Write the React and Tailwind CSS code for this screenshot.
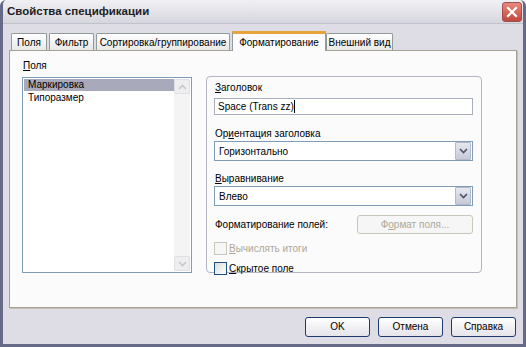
import React from 'react';

const font = { fontFamily: '"Liberation Sans", Arial, sans-serif' };

function Chevron({ up, className }) {
  return (
    <svg width="9" height="6" viewBox="0 0 9 6" className={className}>
      <path d={up ? 'M1 5 L4.5 1.5 L8 5' : 'M1 1 L4.5 4.5 L8 1'} fill="none" stroke="currentColor" strokeWidth="1.6" />
    </svg>
  );
}

function Tab({ label, width, active }) {
  if (active) {
    return (
      <div
        className="relative z-10 -mb-px h-[20px] bg-[#fbfbfb] border-x border-[#919b9c] border-t-[3px] border-t-[#e8a43c] flex items-center justify-center whitespace-nowrap"
        style={{ width }}
      >
        {label}
      </div>
    );
  }
  return (
    <div
      className="h-[17px] mr-[2px] bg-gradient-to-b from-white to-[#e8e8e6] border border-b-0 border-[#919b9c] rounded-t-[2px] flex items-center justify-center whitespace-nowrap"
      style={{ width }}
    >
      {label}
    </div>
  );
}

function Select({ value }) {
  return (
    <div className="h-[20px] border border-[#7f9db9] bg-white flex items-center">
      <span className="flex-1 pl-[4px]">{value}</span>
      <div className="w-[16px] h-[18px] mr-px bg-gradient-to-b from-[#e6e8f0] to-[#c6cad8] border border-[#b4b8c8] rounded-[1px] flex items-center justify-center text-[#4d5366]">
        <Chevron />
      </div>
    </div>
  );
}

function Button({ children }) {
  return (
    <button className="w-[65px] h-[20px] border border-[#1c3c70] rounded-[3px] bg-gradient-to-b from-white to-[#e4e4ea] text-[10px] text-black leading-none">
      {children}
    </button>
  );
}

export default function App() {
  return (
    <div
      className="w-[526px] h-[347px] bg-[#dedce4] border-x-[3px] border-b-[3px] border-[#666a86] rounded-t-[6px] flex flex-col text-[10px] text-black overflow-hidden"
      style={font}
    >
      {/* title bar */}
      <div className="h-[24px] shrink-0 bg-gradient-to-b from-[#f0f0f4] to-[#d6d6de] border-b border-[#c2c2cc] flex items-center pl-[4px] pr-[1px]">
        <span className="flex-1 text-[11.5px] font-bold text-[#1e1e24]">Свойства спецификации</span>
        <div className="w-[20px] h-[20px] rounded-[3px] bg-gradient-to-b from-[#e88a80] to-[#c0473d] border border-[#a05048] flex items-center justify-center">
          <svg width="12" height="12" viewBox="0 0 12 12">
            <path d="M2 2 L10 10 M10 2 L2 10" stroke="white" strokeWidth="2.2" strokeLinecap="square" />
          </svg>
        </div>
      </div>

      <div className="flex-1 flex flex-col px-[6px] pt-[6px]">
        {/* tabs */}
        <div className="flex items-end h-[20px] pl-[2px]">
          <Tab label="Поля" width={36} />
          <Tab label="Фильтр" width={45} />
          <Tab label="Сортировка/группирование" width={134} />
          <Tab label="Форматирование" width={94} active />
          <Tab label="Внешний вид" width={67} />
        </div>

        {/* panel */}
        <div className="h-[258px] bg-[#fbfbfb] border border-[#a6a192] shadow-[1px_1px_0_#c4c0b4] flex pl-[12px] pr-[34px] pt-[8px]">
          <div className="flex flex-col w-[170px]">
            <div className="h-[13px] leading-[13px] pl-px"><span className="underline">П</span>оля</div>
            <div className="mt-[5px] h-[196px] border border-[#7f9db9] bg-white flex p-px">
              <div className="flex-1 flex flex-col">
                <div className="h-[12px] leading-[12px] bg-[#a8aabb] pl-[4px]">Маркировка</div>
                <div className="h-[13px] leading-[13px] pl-[4px]">Типоразмер</div>
              </div>
              <div className="w-[16px] flex flex-col justify-between bg-[#f4f4f4]">
                <div className="h-[15px] bg-[#eeeef0] border border-[#e0e0e4] rounded-[2px] flex items-center justify-center text-[#c8c8cc]">
                  <Chevron up />
                </div>
                <div className="h-[15px] bg-[#eeeef0] border border-[#e0e0e4] rounded-[2px] flex items-center justify-center text-[#c8c8cc]">
                  <Chevron />
                </div>
              </div>
            </div>
          </div>

          <div className="ml-[14px] mt-[17px] h-[197px] flex-1 border border-[#b2b4c2] rounded-[4px] flex flex-col pl-[7px] pr-[8px] pt-[4px]">
            <div className="h-[13px] leading-[13px] pl-px"><span className="underline">З</span>аголовок</div>
            <div className="mt-[4px] h-[17px] border border-[#a8aebc] bg-white flex items-center pl-[3px]">
              <span>Space (Trans zz)</span>
              <span className="w-px h-[13px] bg-black" />
            </div>
            <div className="mt-[12px] h-[13px] leading-[13px] pl-px">Ор<span className="underline">и</span>ентация заголовка</div>
            <div className="mt-px">
              <Select value="Горизонтально" />
            </div>
            <div className="mt-[11px] h-[13px] leading-[13px] pl-px"><span className="underline">В</span>ыравнивание</div>
            <div className="mt-px">
              <Select value="Влево" />
            </div>
            <div className="mt-[9px] flex items-center justify-between">
              <span className="pl-px">Форматирование полей:</span>
              <div className="w-[116px] h-[19px] border border-[#c9c7ba] rounded-[3px] bg-[#f6f6f6] flex items-center justify-center text-[#aca899]">
                Ф<span className="underline">о</span>рмат поля...
              </div>
            </div>
            <div className="mt-[8px] flex items-center h-[13px] text-[#aca899]">
              <div className="w-[13px] h-[13px] border border-[#c9c7ba] bg-[#f6f6f6]" />
              <span className="ml-[2px]"><span className="underline">В</span>ычислять итоги</span>
            </div>
            <div className="mt-[7px] flex items-center h-[13px]">
              <div className="w-[13px] h-[13px] border border-[#1c5180] bg-gradient-to-br from-[#dcdcd8] to-white" />
              <span className="ml-[2px]"><span className="underline">С</span>крытое поле</span>
            </div>
          </div>
        </div>

        {/* buttons */}
        <div className="mt-[9px] flex justify-end gap-[8px] pr-px">
          <Button>OK</Button>
          <Button>Отмена</Button>
          <Button>Справка</Button>
        </div>
      </div>
    </div>
  );
}
